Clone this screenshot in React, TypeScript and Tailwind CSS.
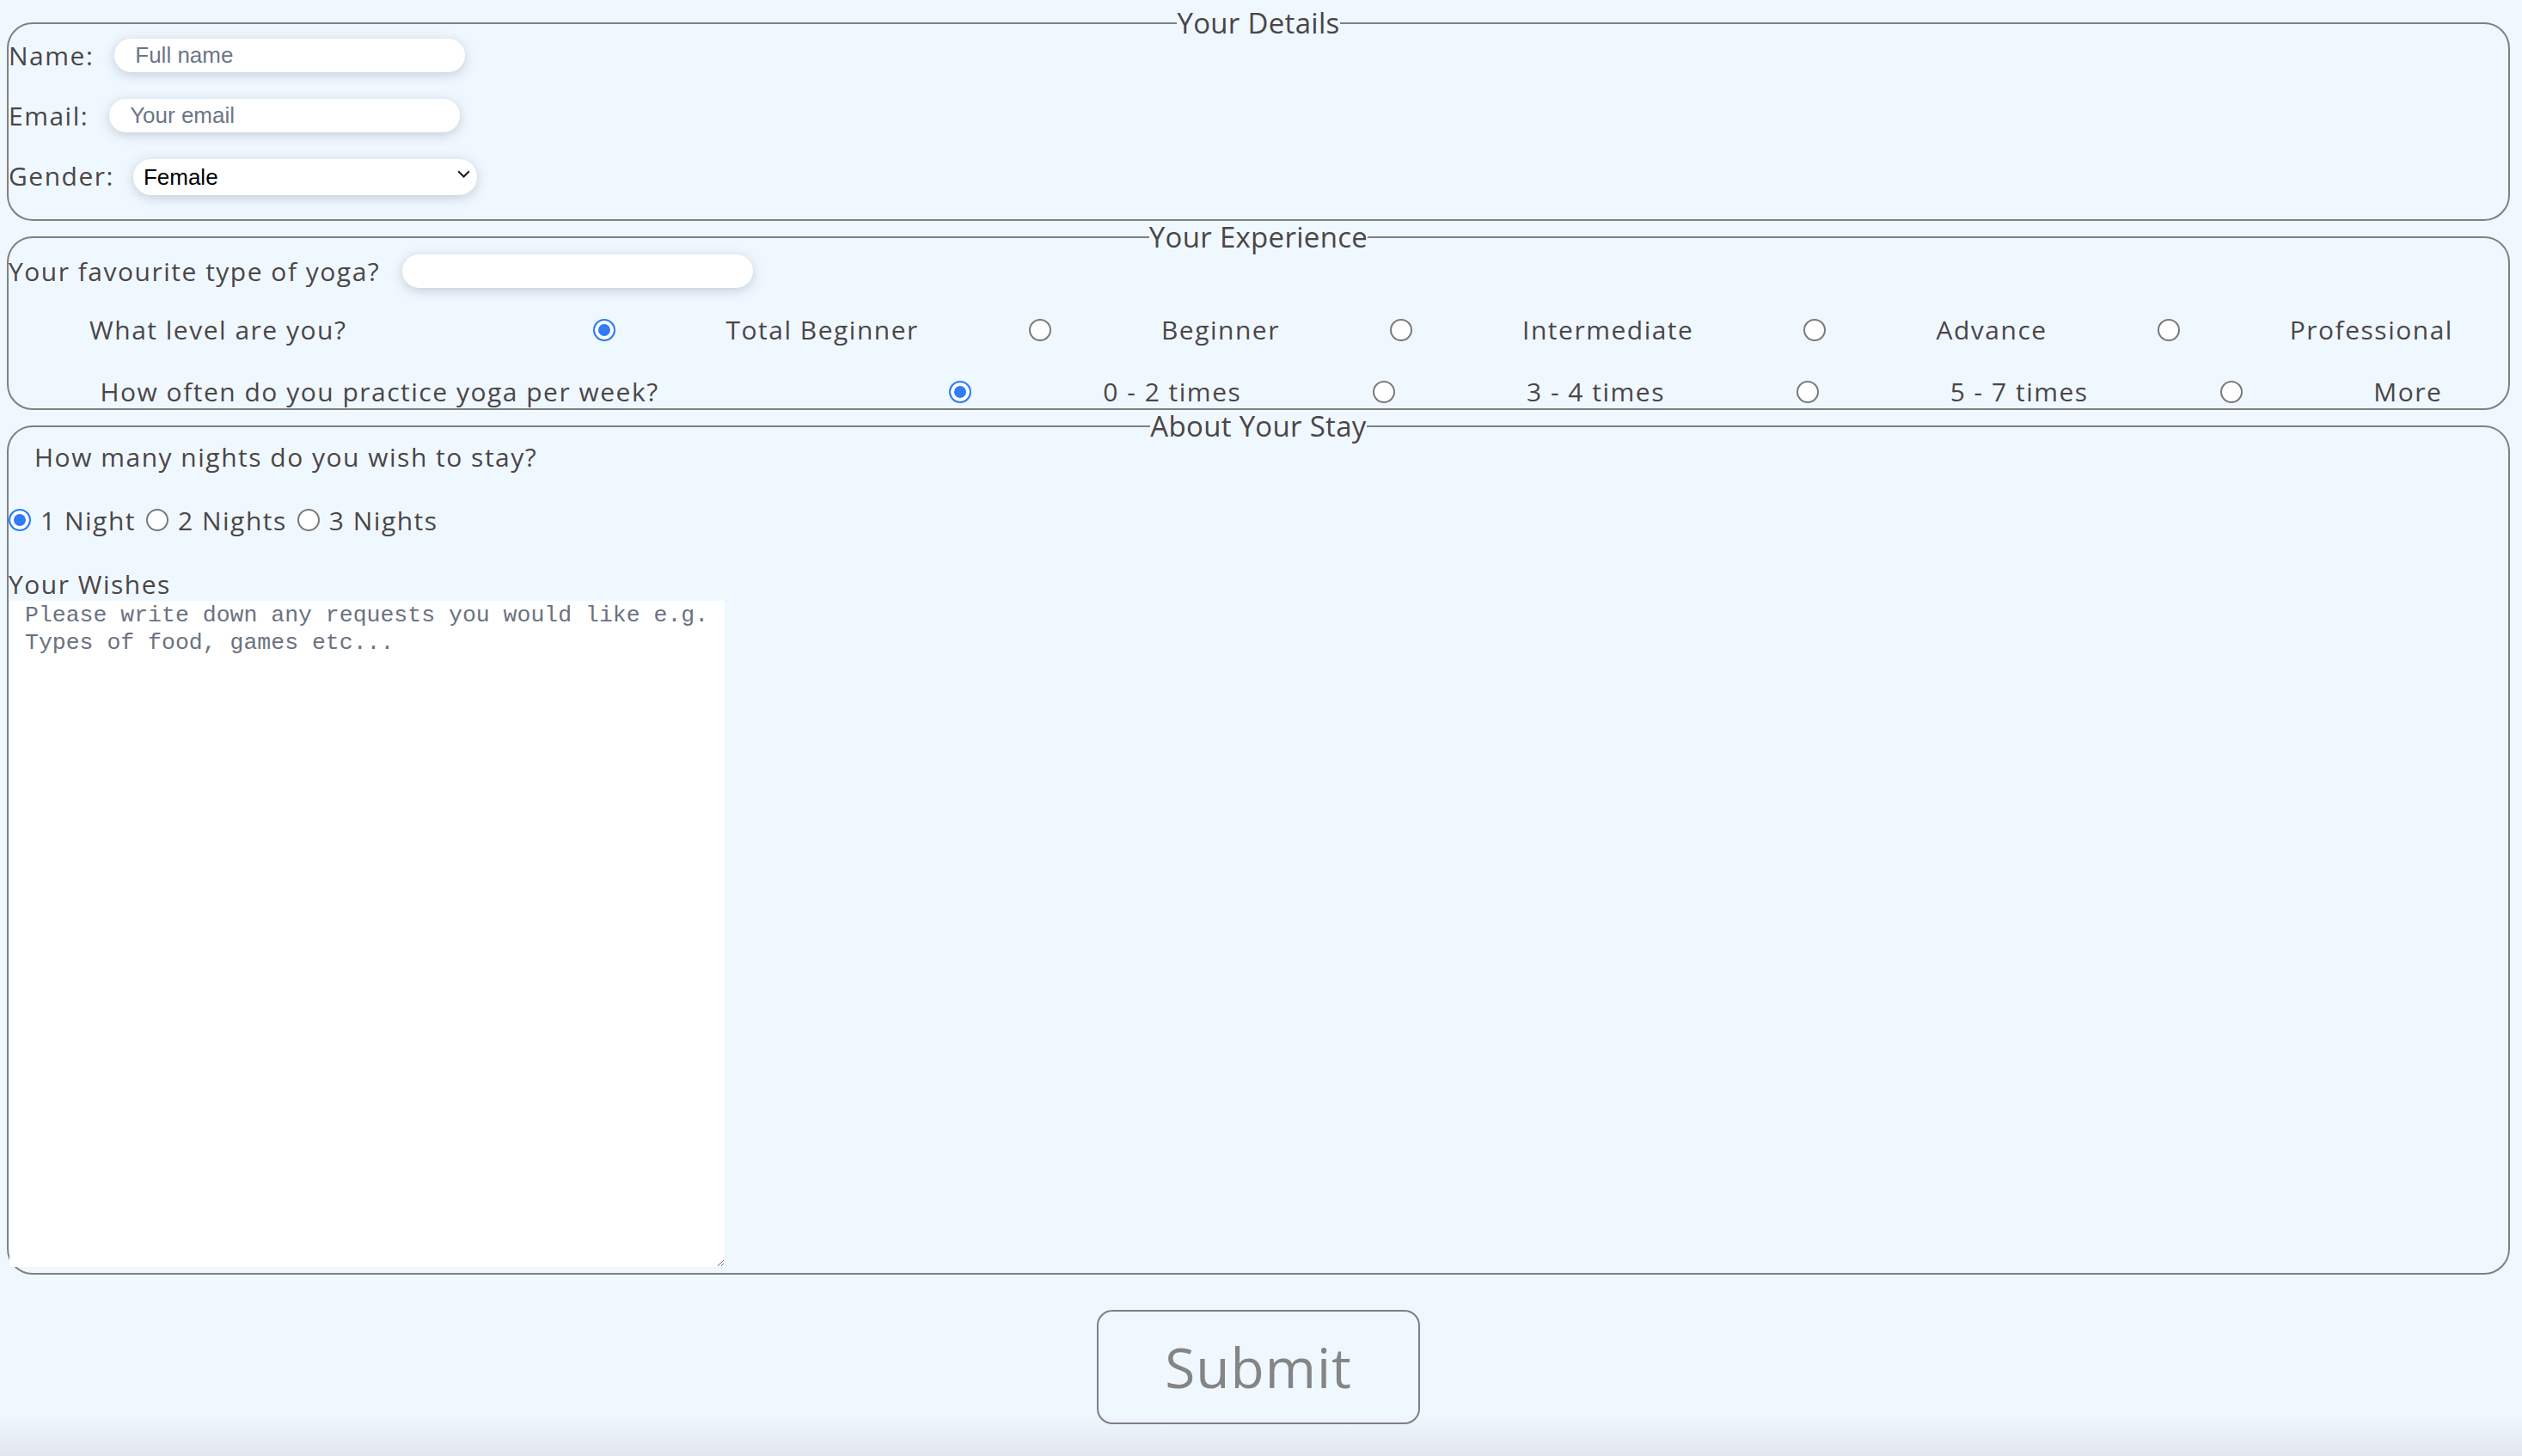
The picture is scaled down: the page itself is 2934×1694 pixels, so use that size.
import { useState } from "react";

const Radio = ({ name, checked }: { name: string; checked?: boolean }) => (
  <input
    type="radio"
    name={name}
    defaultChecked={checked}
    className="appearance-none shrink-0 w-[26px] h-[26px] rounded-full border-2 border-[#7a7a7a] bg-white checked:border-[#2f7cf6] checked:bg-[#2f7cf6] checked:shadow-[inset_0_0_0_4px_#ffffff]"
  />
);

const fieldsetCls = "border-2 border-[#808080] rounded-[30px] min-w-0";
const legendCls = "mx-auto px-0 text-[33px] leading-[38px] tracking-[0.3px]";
const inputCls =
  "h-[39px] w-[408px] rounded-full bg-white pl-[24px] text-[26px] tracking-normal font-['Liberation_Sans',Arial,sans-serif] text-black placeholder:text-[#6b7687] outline-none shadow-[0_3px_14px_rgba(60,70,90,0.25)]";

const levels = ["Total Beginner", "Beginner", "Intermediate", "Advance", "Professional"];
const often = ["0 - 2 times", "3 - 4 times", "5 - 7 times", "More"];
const nights = ["1 Night", "2 Nights", "3 Nights"];

export default function App() {
  const [gender, setGender] = useState("Female");

  return (
    <div className="min-h-screen pt-[8px] pl-[8px] pr-[14px] bg-[linear-gradient(to_bottom,#f0f8ff_1645px,#e2e6ee_1694px)] text-[#4b4647] font-['Open_Sans',sans-serif] text-[30px] tracking-[1.5px]">
      <form onSubmit={(e) => e.preventDefault()}>
        <fieldset className={`${fieldsetCls} pb-[30px]`}>
          <legend className={legendCls}>Your Details</legend>
          <div className="flex items-center h-[39px] -mt-[1px]">
            <label>Name:</label>
            <input className={`${inputCls} ml-[24px]`} placeholder="Full name" />
          </div>
          <div className="flex items-center h-[39px] mt-[31px]">
            <label>Email:</label>
            <input className={`${inputCls} ml-[24px]`} placeholder="Your email" />
          </div>
          <div className="flex items-center h-[42px] mt-[29px]">
            <label>Gender:</label>
            <div className="relative ml-[22px]">
              <select
                value={gender}
                onChange={(e) => setGender(e.target.value)}
                className="appearance-none h-[42px] w-[400px] rounded-full bg-white pl-[12px] text-[26px] tracking-normal text-black font-['Liberation_Sans',Arial,sans-serif] outline-none shadow-[0_3px_14px_rgba(60,70,90,0.25)]"
              >
                <option>Female</option>
                <option>Male</option>
                <option>Other</option>
              </select>
              <svg
                className="absolute right-[8px] top-[17px] pointer-events-none"
                width="15"
                height="9"
                viewBox="0 0 15 9"
                fill="none"
              >
                <path d="M1.2 1.2l6.3 6.3 6.3-6.3" stroke="#1a1a1a" strokeWidth="2" />
              </svg>
            </div>
          </div>
        </fieldset>

        <fieldset className={fieldsetCls}>
          <legend className={legendCls}>Your Experience</legend>
          <div className="flex items-center h-[39px] mt-[1px]">
            <label>Your favourite type of yoga?</label>
            <input className={`${inputCls} ml-[26px]`} />
          </div>
          <div className="flex items-center justify-around h-[41px] mt-[28px]">
            <span className="pl-[30px] pr-[159px]">What level are you?</span>
            {levels.map((l, i) => (
              <>
                <Radio key={l + "r"} name="level" checked={i === 0} />
                <span key={l}>{l}</span>
              </>
            ))}
          </div>
          <div className="flex items-center justify-around h-[39px] mt-[32px]">
            <span className="pl-[30px] pr-[185px]">How often do you practice yoga per week?</span>
            {often.map((l, i) => (
              <>
                <Radio key={l + "r"} name="often" checked={i === 0} />
                <span key={l}>{l}</span>
              </>
            ))}
          </div>
        </fieldset>

        <fieldset className={`${fieldsetCls} pb-[7px]`}>
          <legend className={legendCls}>About Your Stay</legend>
          <p className="pl-[30px] leading-[34px]">How many nights do you wish to stay?</p>
          <div className="flex items-center h-[34px] mt-[39px]">
            {nights.map((n, i) => (
              <div key={n} className={`flex items-center ${i > 0 ? "ml-[12px]" : ""}`}>
                <Radio name="nights" checked={i === 0} />
                <span className="ml-[11px]">{n}</span>
              </div>
            ))}
          </div>
          <p className="mt-[41px] leading-[34px]">Your Wishes</p>
          <textarea
            className="block mt-[2px] ml-[1px] w-[832px] h-[775px] bg-white pl-[18px] pt-[1px] text-[26.5px] leading-[32px] tracking-normal font-['Liberation_Mono',monospace] text-black placeholder:text-[#6b7280] outline-none"
            placeholder={"Please write down any requests you would like e.g.\nTypes of food, games etc..."}
          />
        </fieldset>

        <div className="flex justify-center mt-[41px]">
          <button
            type="submit"
            className="w-[376px] h-[133px] rounded-[18px] border-2 border-[#7f7f7f] text-[64px] tracking-[1px] text-[#858585]"
          >
            Submit
          </button>
        </div>
      </form>
    </div>
  );
}
